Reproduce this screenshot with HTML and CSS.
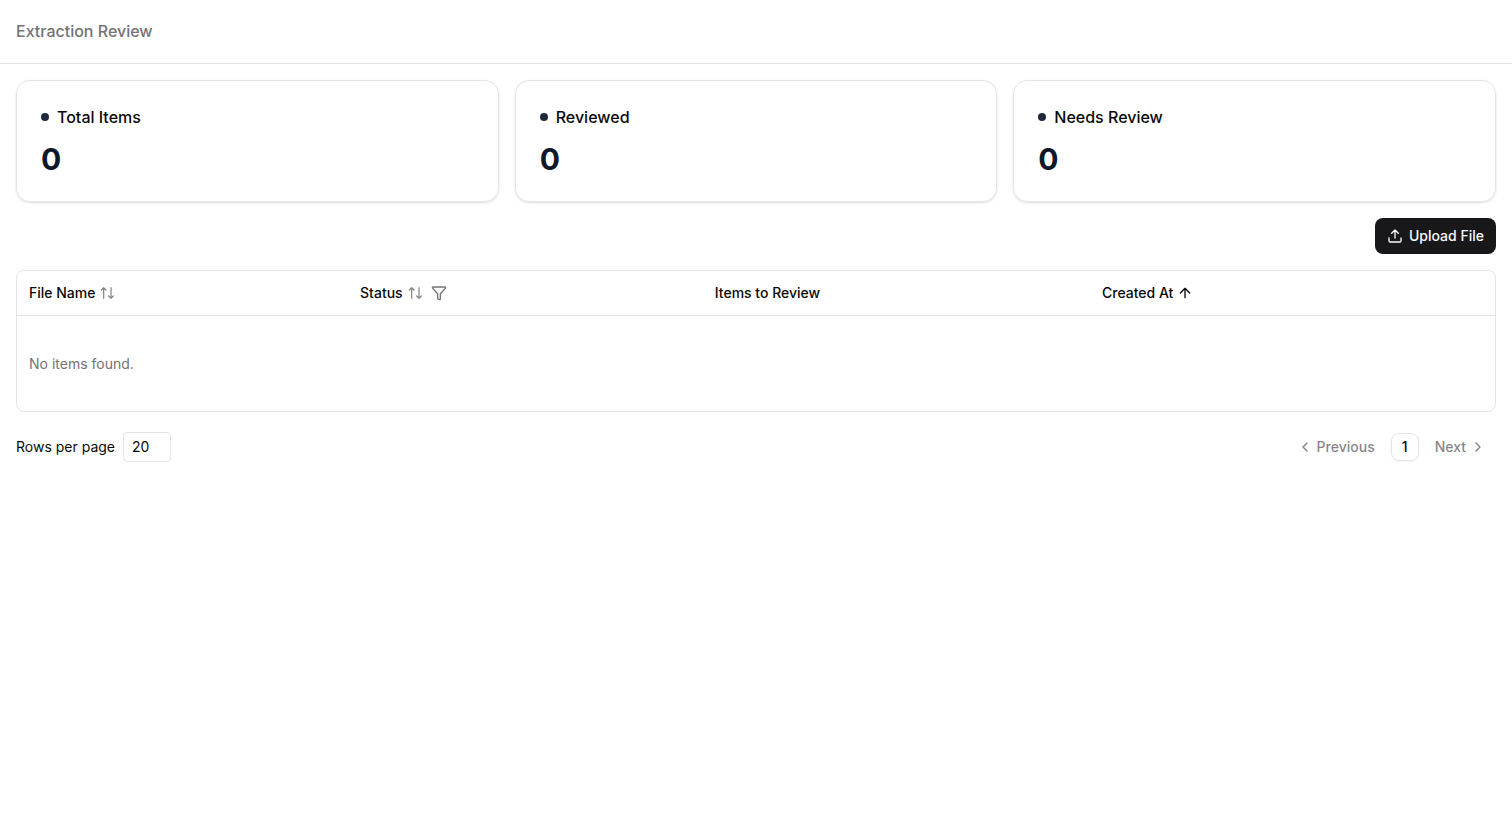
FILE: index.html
```html
<!DOCTYPE html>
<html lang="en">
<head>
<meta charset="utf-8">
<meta name="viewport" content="width=device-width, initial-scale=1">
<title>Extraction Review</title>
<link rel="stylesheet" href="styles.css">
</head>
<body>
<header class="topbar"><h1 class="topbar-title">Extraction Review</h1></header>
<main class="content">
  <section class="stats" aria-label="Summary">
    <article class="card"><h2 class="card-title"><span class="dot"></span>Total Items</h2><p class="card-value">0</p></article>
    <article class="card"><h2 class="card-title"><span class="dot"></span>Reviewed</h2><p class="card-value">0</p></article>
    <article class="card"><h2 class="card-title"><span class="dot"></span>Needs Review</h2><p class="card-value">0</p></article>
  </section>
  <div class="actions">
    <button class="upload" type="button">
      <svg class="icon" viewBox="0 0 24 24" aria-hidden="true"><path d="M12 3v12M17 8l-5-5-5 5M21 15v4a2 2 0 0 1-2 2H5a2 2 0 0 1-2-2v-4"/></svg>
      Upload File
    </button>
  </div>
  <div class="table-box">
    <table class="items">
      <thead>
        <tr>
          <th class="col-name" scope="col"><div class="head"><button class="sort" type="button">File Name
            <svg class="icon muted" viewBox="0 0 24 24" aria-hidden="true"><path d="M21.5 16.5L18 20l-3.500-3.500M18 20V4M3.500 7.500L7 4l3.500 3.500M7 4v16"/></svg></button></div></th>
          <th class="col-status" scope="col"><div class="head"><button class="sort" type="button">Status
            <svg class="icon muted" viewBox="0 0 24 24" aria-hidden="true"><path d="M21.5 16.5L18 20l-3.500-3.500M18 20V4M3.500 7.500L7 4l3.500 3.500M7 4v16"/></svg></button>
            <button class="filter" type="button" aria-label="Filter status"><svg class="icon" viewBox="0 0 24 24" aria-hidden="true"><path d="M10 20a1 1 0 0 0 .553.895l2 1A1 1 0 0 0 14 21v-7a2 2 0 0 1 .517-1.341L21.74 4.67A1 1 0 0 0 21 3H3a1 1 0 0 0-.742 1.67l7.225 7.989A2 2 0 0 1 10 14z"/></svg></button></div></th>
          <th class="col-review" scope="col">Items to Review</th>
          <th class="col-created" scope="col"><div class="head"><button class="sort" type="button">Created At
            <svg class="icon" viewBox="0 0 24 24" aria-hidden="true"><path d="M5 12l7-7 7 7M12 19V5"/></svg></button></div></th>
        </tr>
      </thead>
      <tbody><tr><td class="empty" colspan="4">No items found.</td></tr></tbody>
    </table>
  </div>
  <div class="footer">
    <div class="rows">
      <label for="rows">Rows per page</label>
      <input class="rows-input" id="rows" type="text" inputmode="numeric" value="20">
    </div>
    <nav class="pager" aria-label="Pagination">
      <button class="step" type="button"><svg class="icon" viewBox="0 0 24 24" aria-hidden="true"><path d="M15 18l-6-6 6-6"/></svg>Previous</button>
      <button class="page" type="button" aria-current="page">1</button>
      <button class="step" type="button">Next<svg class="icon" viewBox="0 0 24 24" aria-hidden="true"><path d="M9 18l6-6-6-6"/></svg></button>
    </nav>
  </div>
</main>
</body>
</html>
```

FILE: styles.css
```css
* { box-sizing: border-box; }
body {
  margin: 0;
  background: #fff;
  color: #0a0a0a;
  font: 400 14px/20px Inter, sans-serif;
}
h1, h2, p { margin: 0; }
button, input { font: inherit; color: inherit; }
button { border: 0; padding: 0; background: none; cursor: pointer; }

.icon {
  width: 16px;
  height: 16px;
  flex: none;
  fill: none;
  stroke: currentColor;
  stroke-width: 2;
  stroke-linecap: round;
  stroke-linejoin: round;
}

.topbar {
  display: flex;
  align-items: center;
  height: 64px;
  padding: 0 16px 1px;
  border-bottom: 1px solid #e5e5e5;
}
.topbar-title { font-size: 16px; line-height: 24px; font-weight: 500; color: #737373; }

.content { display: flex; flex-direction: column; gap: 16px; padding: 16px; }

.stats { display: grid; grid-template-columns: repeat(3, 1fr); gap: 16px; }
.card {
  display: flex;
  flex-direction: column;
  gap: 12px;
  padding: 24px;
  border: 1px solid #e5e5e5;
  border-radius: 14px;
  box-shadow: 0 1px 3px rgba(0, 0, 0, .1), 0 1px 2px -1px rgba(0, 0, 0, .1);
}
.card-title {
  display: flex;
  align-items: center;
  gap: 8px;
  font-size: 16px;
  line-height: 24px;
  font-weight: 500;
}
.dot { width: 8px; height: 8px; border-radius: 50%; background: #1e293b; }
.card-value { font-size: 30px; line-height: 36px; font-weight: 700; color: #0f172a; }

.actions { display: flex; justify-content: flex-end; }
.upload {
  display: flex;
  align-items: center;
  gap: 6px;
  height: 36px;
  padding: 0 12px;
  border-radius: 8px;
  background: #18181b;
  color: #fafafa;
  font-weight: 500;
}

.table-box { border: 1px solid #e5e5e5; border-radius: 8px; overflow: hidden; }
.items { width: 100%; table-layout: fixed; border-collapse: separate; border-spacing: 0; }
.items th {
  height: 45px;
  padding: 0 12px;
  border-bottom: 1px solid #e5e5e5;
  text-align: left;
  font-weight: 500;
}
.col-name { width: 22.4%; }
.col-status { width: 24%; }
.col-review { width: 26.2%; }
.head { display: flex; align-items: center; gap: 8px; }
.sort { display: flex; align-items: center; gap: 4px; font-weight: 500; }
.muted { opacity: .5; }
.muted path { stroke-width: 1.8; }
.filter { display: flex; color: #737373; }
.items .empty { height: 95px; padding: 0 12px; color: #737373; }

.footer { display: flex; align-items: center; justify-content: space-between; height: 38px; }
.rows { display: flex; align-items: center; gap: 8px; }
.rows-input {
  width: 48px;
  height: 30px;
  padding: 0 8px 1px;
  border: 1px solid #e5e5e5;
  border-radius: 4px;
  background: #fff;
}
.pager { display: flex; align-items: center; gap: 6px; font-weight: 500; }
.step { display: flex; align-items: center; gap: 4px; height: 36px; padding: 0 10px; opacity: .5; }
.page {
  width: 28px;
  height: 28px;
  border: 1px solid #e5e5e5;
  border-radius: 8px;
  box-shadow: 0 1px 2px rgba(0, 0, 0, .05);
}
```
